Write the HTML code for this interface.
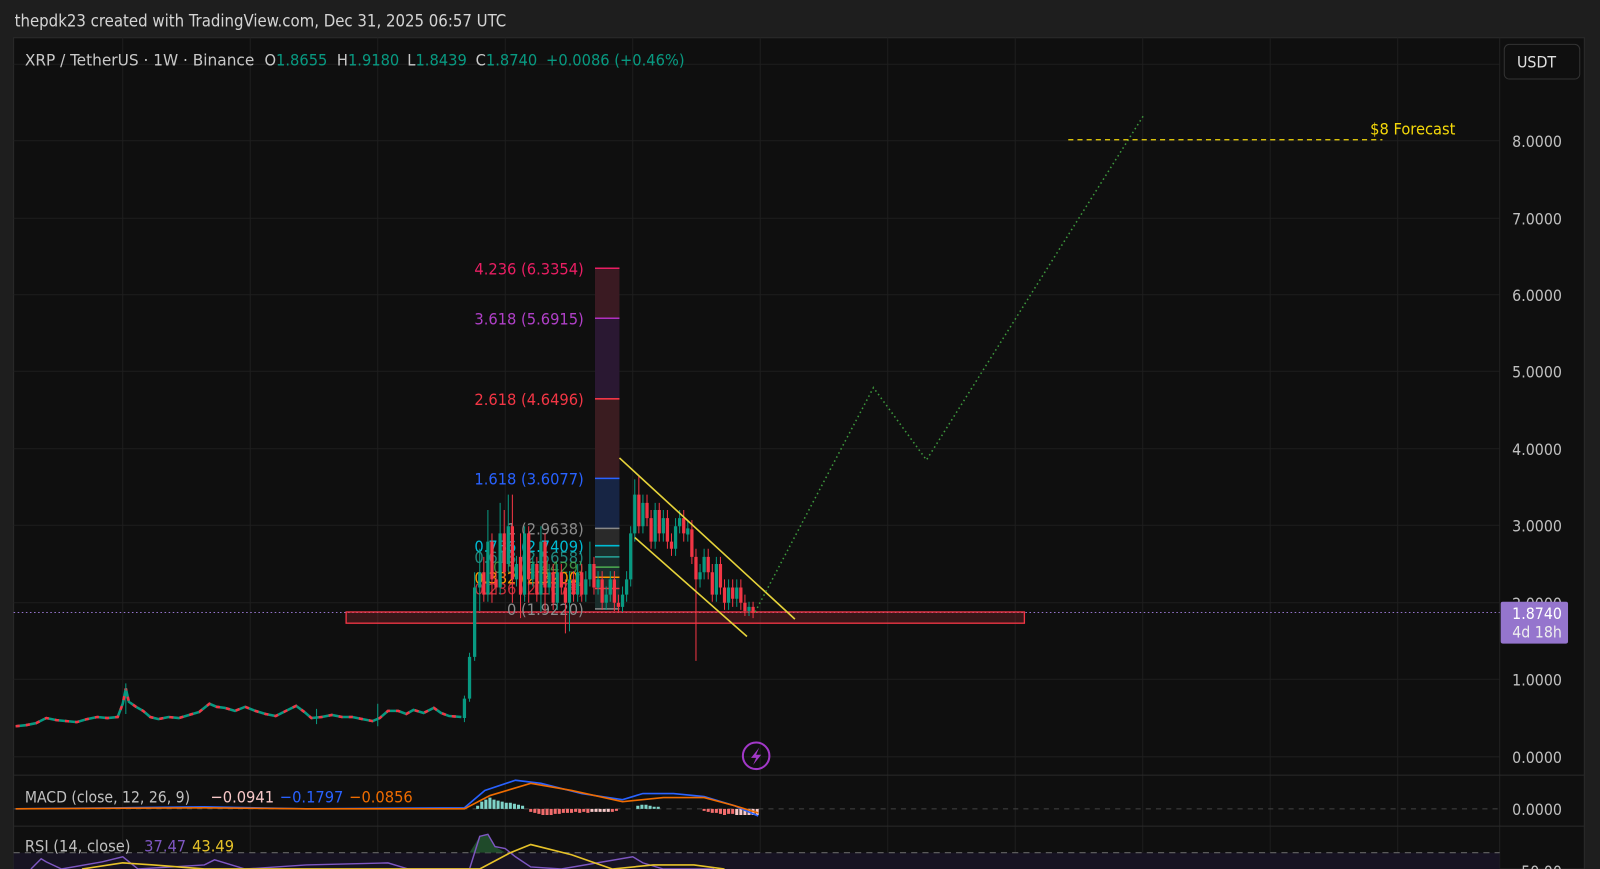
<!DOCTYPE html>
<html><head><meta charset="utf-8"><style>
html,body{margin:0;padding:0;background:#1e1e1e;width:1600px;height:869px;overflow:hidden}
svg{display:block}
text{font-family:"DejaVu Sans Condensed","Liberation Sans",sans-serif}
</style></head><body>
<svg width="1600" height="869" viewBox="0 0 1568 852" xmlns="http://www.w3.org/2000/svg">
<rect width="1568" height="852" fill="#1e1e1e"/>
<text x="14" y="26" font-size="16.3" fill="#d4d4d4" textLength="482" lengthAdjust="spacingAndGlyphs">thepdk23 created with TradingView.com, Dec 31, 2025 06:57 UTC</text>
<rect x="13" y="37" width="1540" height="815" fill="#0f0f0f" stroke="#2a2a2a"/>
<!-- grid -->
<g stroke="#1e1e1e" stroke-width="1">
<path d="M120 37V852M245 37V852M370 37V852M495 37V852M620 37V852M745 37V852M870 37V852M995 37V852M1120 37V852M1245 37V852M1370 37V852"/>
<path d="M13 63H1470M13 138H1470M13 214H1470M13 289H1470M13 364H1470M13 440H1470M13 515H1470M13 591H1470M13 666H1470M13 742H1470"/>
</g>
<path d="M1470 37V852" stroke="#222"/>
<path d="M13 760H1553M13 810H1553" stroke="#2a2a2a"/>
<!-- header -->
<g font-size="16" fill="#c8c8c8">
<text x="24" y="64" textLength="225" lengthAdjust="spacingAndGlyphs">XRP / TetherUS · 1W · Binance</text>
<text x="259" y="64">O<tspan fill="#089981">1.8655</tspan></text>
<text x="330" y="64">H<tspan fill="#089981">1.9180</tspan></text>
<text x="399" y="64">L<tspan fill="#089981">1.8439</tspan></text>
<text x="466" y="64">C<tspan fill="#089981">1.8740</tspan></text>
<text x="535" y="64" fill="#089981">+0.0086 (+0.46%)</text>
</g>
<rect x="1474.5" y="43.5" width="74" height="34" rx="5" fill="#0f0f0f" stroke="#333"/>
<text x="1487" y="66" font-size="15.5" fill="#e0e0e0">USDT</text>
<!-- axis labels -->
<g font-size="15.5" fill="#c0c0c0" text-anchor="end">
<text x="1531" y="144">8.0000</text><text x="1531" y="220">7.0000</text><text x="1531" y="295">6.0000</text>
<text x="1531" y="370">5.0000</text><text x="1531" y="446">4.0000</text><text x="1531" y="521">3.0000</text>
<text x="1531" y="597">2.0000</text><text x="1531" y="672">1.0000</text><text x="1531" y="748">0.0000</text>
<text x="1531" y="799">0.0000</text><text x="1531" y="860">50.00</text>
</g>
<!-- current price line -->
<path d="M13 600.5H1470" stroke="#9575cd" stroke-dasharray="1.5 2.5"/>
<rect x="1471" y="590" width="66" height="41" rx="2" fill="#9575cd"/>
<text x="1531" y="607" font-size="15.5" fill="#fff" text-anchor="end">1.8740</text>
<text x="1531" y="625" font-size="15.5" fill="#eee" text-anchor="end">4d 18h</text>
<!-- red zone -->
<rect x="339" y="600" width="665" height="11" fill="#f23645" fill-opacity="0.18" stroke="#f23645" stroke-width="1.3"/>
<!-- fib box -->
<rect x="583" y="263" width="24" height="49" fill="#3a1a22"/>
<rect x="583" y="312" width="24" height="79" fill="#2a1832"/>
<rect x="583" y="391" width="24" height="78" fill="#3a1c20"/>
<rect x="583" y="469" width="24" height="49" fill="#172544"/>
<rect x="583" y="518" width="24" height="17" fill="#2a2a2a"/>
<rect x="583" y="535" width="24" height="63" fill="#1a2e2c"/>
<g stroke-width="1.5">
<path d="M583 263H607" stroke="#e91e63"/><path d="M583 312H607" stroke="#b030c0"/>
<path d="M583 391H607" stroke="#f23645"/><path d="M583 469H607" stroke="#2962ff"/>
<path d="M583 518H607" stroke="#888"/><path d="M583 535H607" stroke="#00bcd4"/>
<path d="M583 546H607" stroke="#26a69a"/><path d="M583 556H607" stroke="#4caf50"/>
<path d="M583 566H607" stroke="#ff9800"/><path d="M583 577H607" stroke="#f23645"/>
<path d="M583 597H607" stroke="#888"/>
</g>
<g font-size="16" text-anchor="end">
<text x="572" y="269" fill="#e91e63">4.236 (6.3354)</text>
<text x="572" y="318" fill="#b040c8">3.618 (5.6915)</text>
<text x="572" y="397" fill="#f23645">2.618 (4.6496)</text>
<text x="572" y="475" fill="#2962ff">1.618 (3.6077)</text>
<text x="572" y="524" fill="#8a8a8a">1 (2.9638)</text>
<text x="572" y="541" fill="#00bcd4">0.786 (2.7409)</text>
<text x="572" y="552" fill="#26a69a" opacity=".8">0.618 (2.5658)</text>
<text x="572" y="562" fill="#4caf50" opacity=".8">0.5 (2.4429)</text>
<text x="572" y="572" fill="#ff9800">0.382 (2.3200)</text>
<text x="572" y="583" fill="#f23645" opacity=".8">0.236 (2.1678)</text>
<text x="572" y="603" fill="#8a8a8a">0 (1.9220)</text>
</g>
<!-- base candles -->
<path d="M15 712L25 711 35 709 45 704 55 706 65 707 75 708 85 705 95 703 105 704 115 703 120 690 123 675 126 688 133 693 140 697 147 703 155 705 165 703 175 704 185 701 195 698 205 690 212 693 220 694 230 697 240 693 250 697 260 700 270 702 280 697 290 692 298 698 305 704 315 703 325 701 335 703 345 703 355 705 365 707 372 704 380 697 390 697 398 700 405 696 415 699 425 694 432 699 440 702 452 703" fill="none" stroke="#089981" stroke-width="2.5"/>
<path d="M15 712L25 711 35 709 45 704 55 706 65 707 75 708 85 705 95 703 105 704 115 703 120 690 123 675 126 688 133 693 140 697 147 703 155 705 165 703 175 704 185 701 195 698 205 690 212 693 220 694 230 697 240 693 250 697 260 700 270 702 280 697 290 692 298 698 305 704 315 703 325 701 335 703 345 703 355 705 365 707 372 704 380 697 390 697 398 700 405 696 415 699 425 694 432 699 440 702 452 703" fill="none" stroke="#f23645" stroke-width="2.5" stroke-dasharray="4 6"/>
<path d="M123 670V700M370 690V712M310 695V710" stroke="#089981" stroke-width="1"/>
<!-- green candles -->
<path stroke="#089981" stroke-width="1" d="M455 682V708M460 640V688M465 561V648M470 538V599M478 500V590M490 493V583M498 485V560M506 545V575M514 516V590M522 545V575M530 516V600M538 553V583M546 553V598M558 560V619M566 553V590M574 560V590M578 531V575M586 560V583M594 575V598M598 560V590M610 575V600M614 560V590M618 516V575M622 470V531M630 485V523M642 493V538M650 500V531M662 508V545M666 500V523M674 510V531M686 553V576M690 538V568M702 546V590M714 568V598M722 568V595M734 590V604"/>
<path stroke="#089981" stroke-width="3.2" d="M455 685V704M460 644V685M465 576V644M470 561V576M478 531V583M490 523V576M498 516V553M506 553V568M514 523V583M522 553V568M530 531V583M538 561V576M546 561V591M558 568V591M566 561V583M574 568V583M578 553V568M586 568V576M594 583V591M598 568V583M610 583V595M614 568V583M618 523V568M622 485V523M630 493V516M642 500V531M650 508V523M662 516V538M666 508V516M674 518V524M686 561V568M690 546V561M702 553V583M714 576V591M722 576V587M734 595V599"/>
<!-- red candles -->
<path stroke="#f23645" stroke-width="1" d="M474 546V590M482 523V591M486 560V583M494 500V568M502 485V591M510 523V606M518 516V591M526 546V590M534 523V599M542 553V598M550 553V583M554 568V621M562 560V590M570 553V590M582 546V583M590 560V598M602 560V599M606 583V600M626 466V523M634 485V516M638 500V538M646 493V531M654 500V538M658 523V545M670 500V531M678 510V553M682 538V648M694 538V568M698 553V590M706 546V583M710 568V598M718 568V595M726 568V598M730 583V604M738 590V606"/>
<path stroke="#f23645" stroke-width="3.2" d="M474 561V583M482 531V568M486 568V576M494 523V561M502 516V568M510 546V583M518 523V568M526 553V583M534 531V576M542 561V591M550 561V576M554 576V591M562 568V583M570 561V583M582 553V576M590 568V591M602 568V591M606 591V595M626 485V516M634 493V508M638 508V531M646 500V523M654 508V531M658 531V538M670 508V523M678 519V546M682 546V568M694 546V561M698 561V583M706 553V576M710 576V591M718 576V587M726 576V591M730 591V599M738 595V601"/>
<!-- channel -->
<path d="M607 449L779 607M622 527L732 624" stroke="#e6d33a" stroke-width="1.6"/>
<!-- forecast path -->
<path d="M740 600L856 380 908 451 1121 113" fill="none" stroke="#3e9a3e" stroke-width="1.5" stroke-dasharray="1.5 3"/>
<path d="M1047 137H1355" stroke="#f5d90a" stroke-width="1.3" stroke-dasharray="5 4"/>
<text x="1343" y="132" font-size="16" fill="#f5d90a">$8 Forecast</text>
<!-- lightning -->
<circle cx="741" cy="741" r="13" fill="none" stroke="#a238c8" stroke-width="2"/>
<path d="M744 733L736 743H741L738 750L746 740H741Z" fill="#a238c8"/>
<!-- MACD -->
<path d="M13 793H1470" stroke="#444" stroke-dasharray="5 5"/>
<path stroke="#7fd3c8" stroke-width="3" d="M468 793V790M472 793V786M476 793V784M480 793V782M484 793V784M488 793V785M492 793V786M496 793V787M500 793V787M504 793V788M508 793V789M512 793V790M625 793V790M629 793V789M633 793V789M637 793V790M641 793V791M645 793V791"/>
<path stroke="#f26d6d" stroke-width="3" d="M520 793V796M524 793V797M528 793V798M532 793V799M536 793V799M540 793V799M544 793V798M548 793V798M552 793V797M556 793V797M560 793V797M564 793V796M568 793V797M572 793V796M576 793V797M600 793V796M604 793V795M690 793V795M694 793V796M698 793V797M702 793V797M706 793V798M710 793V799M714 793V798M718 793V798"/>
<path stroke="#f8c8c8" stroke-width="3" d="M580 793V796M584 793V796M588 793V796M592 793V796M596 793V796M722 793V799M726 793V799M730 793V799M734 793V799M738 793V799M742 793V799"/>
<path d="M15 793L120 792 200 791 300 793 455 792 475 775 505 765 530 768 570 778 610 784 630 778 660 778 690 781 720 790 743 800" fill="none" stroke="#2962ff" stroke-width="1.6"/>
<path d="M15 793L200 792 300 793 455 793 480 780 520 768 560 775 610 786 650 782 690 782 720 790 743 797" fill="none" stroke="#ef6c00" stroke-width="1.6"/>
<g font-size="16" fill="#c0c0c0">
<text x="24" y="787" textLength="162" lengthAdjust="spacingAndGlyphs">MACD (close, 12, 26, 9)</text>
<text x="206" y="787" fill="#f8c8c8">−0.0941</text>
<text x="274" y="787" fill="#2962ff">−0.1797</text>
<text x="342" y="787" fill="#ef6c00">−0.0856</text>
</g>
<!-- RSI -->
<rect x="13" y="836" width="1457" height="16" fill="#171322"/>
<path d="M13 836H1470" stroke="#666" stroke-dasharray="6 5"/>
<path d="M460 836L470 820 478 818 485 830 495 836Z" fill="#1f4a2a"/>
<path d="M30 852L40 842 45 845 60 852 100 845 120 840 135 852 200 848 210 843 240 852 300 848 380 846 400 852 460 852 470 820 478 818 485 830 495 832 505 840 520 850 550 852 620 840 630 846 650 852 700 852" fill="none" stroke="#7e57c2" stroke-width="1.4"/>
<path d="M80 852L120 846 150 848 200 852 300 852 470 852 500 836 520 828 560 838 600 852 640 848 680 848 710 852" fill="none" stroke="#e6c229" stroke-width="1.6"/>
<g font-size="16" fill="#c0c0c0">
<text x="24" y="835">RSI (14, close)</text>
<text x="141" y="835" fill="#7e57c2">37.47</text>
<text x="188" y="835" fill="#e6c229">43.49</text>
</g>
</svg>
</body></html>
